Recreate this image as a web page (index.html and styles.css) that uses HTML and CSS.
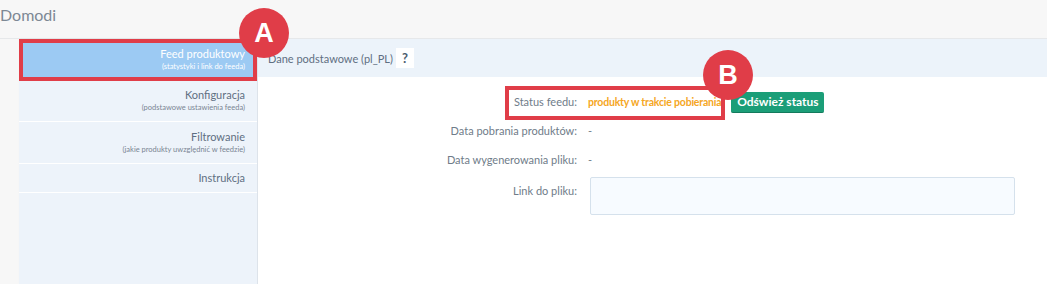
FILE: index.html
```html
<!DOCTYPE html>
<html lang="pl">
<head>
    <meta charset="UTF-8">
    <title>Domodi</title>
    <link rel="stylesheet" href="styles.css">
</head>
<body>
    <div class="top">Domodi</div>
    <div class="panel">
        <div class="sidebar">
            <div class="item active">
                <div class="title">Feed produktowy</div>
                <div class="sub">(statystyki i link do feeda)</div>
            </div>
            <div class="item">
                <div class="title">Konfiguracja</div>
                <div class="sub">(podstawowe ustawienia feeda)</div>
            </div>
            <div class="item">
                <div class="title">Filtrowanie</div>
                <div class="sub">(jakie produkty uwzględnić w feedzie)</div>
            </div>
            <div class="item short">
                <div class="title">Instrukcja</div>
            </div>
        </div>
        <div class="content">
            <div class="head">
                <span>Dane podstawowe (pl_PL)</span>
                <span class="help">?</span>
            </div>
            <div class="form">
                <div class="row">
                    <div class="label">Status feedu:</div>
                    <div class="value status">produkty w trakcie pobierania</div>
                    <button class="btn">Odśwież status</button>
                </div>
                <div class="row">
                    <div class="label">Data pobrania produktów:</div>
                    <div class="value">-</div>
                </div>
                <div class="row">
                    <div class="label">Data wygenerowania pliku:</div>
                    <div class="value">-</div>
                </div>
                <div class="row link">
                    <div class="label">Link do pliku:</div>
                    <div class="field"></div>
                </div>
            </div>
            <div class="mark-box"></div>
        </div>
        <div class="badge badge-a">A</div>
        <div class="badge badge-b">B</div>
    </div>
</body>
</html>
```

FILE: styles.css
```css
body {
    margin: 0;
    background: #f7f7f7;
    font-family: 'Lato', sans-serif;
    color: #6b7886;
    overflow: hidden;
}
.top {
    height: 38px;
    line-height: 30px;
    font-size: 16px;
    color: #7d8894;
}
.panel {
    position: relative;
    display: flex;
    height: 245px;
    border-top: 1px solid #e6e8ea;
}
.sidebar {
    width: 238px;
    margin-left: 19px;
    background: #edf3fa;
    border-right: 1px solid #dde3ea;
    box-shadow: 1px 0 2px rgba(0, 0, 0, 0.06);
}
.item {
    height: 41.5px;
    border-bottom: 1px solid #fff;
    padding-right: 12px;
    text-align: right;
    display: flex;
    flex-direction: column;
    justify-content: center;
    box-sizing: border-box;
}
.item.short {
    height: 29px;
}
.item .title {
    font-size: 11px;
    color: #5f6f82;
    line-height: 14px;
}
.item .sub {
    font-size: 7.5px;
    color: #7a8593;
    line-height: 11px;
}
.item.active {
    background: #9ccaf3;
    outline: 4px solid #e03d48;
    outline-offset: -4px;
}
.item.active .title,
.item.active .sub {
    color: #fff;
}
.content {
    position: relative;
    flex: 1;
    background: #fff;
}
.head {
    height: 38px;
    background: #ecf3fa;
    display: flex;
    align-items: center;
    padding-left: 10px;
    font-size: 11px;
    color: #5f6f82;
}
.help {
    margin-left: 3px;
    background: #fff;
    width: 18px;
    height: 20px;
    line-height: 20px;
    text-align: center;
    font-weight: bold;
    font-size: 13px;
    color: #4d5d6e;
}
.form {
    padding-top: 10px;
}
.row {
    display: flex;
    align-items: center;
    height: 29px;
    font-size: 11px;
}
.label {
    width: 319px;
    text-align: right;
    color: #6f7c89;
}
.value {
    margin-left: 11px;
    color: #6f7c89;
}
.value.status {
    color: #f5a623;
    font-weight: bold;
    font-size: 10.5px;
    letter-spacing: -0.2px;
}
.btn {
    margin-left: 10px;
    margin-top: 1px;
    border: none;
    background: #1b9e78;
    color: #fff;
    font-family: inherit;
    font-size: 12px;
    font-weight: bold;
    height: 21px;
    width: 93px;
    padding: 0;
    border-radius: 2px;
    border-bottom: 1px solid #137a5c;
}
.row.link {
    align-items: flex-start;
    height: auto;
    margin-top: 3px;
}
.row.link .label {
    padding-top: 7px;
}
.field {
    margin-left: 13px;
    width: 423px;
    height: 36px;
    background: #f7fbff;
    border: 1px solid #d5e1ec;
    border-radius: 2px;
}
.mark-box {
    position: absolute;
    left: 247px;
    top: 47px;
    width: 212px;
    height: 26px;
    border: 4px solid #e03d48;
}
.badge {
    position: absolute;
    width: 50px;
    height: 50px;
    border-radius: 50%;
    background: #e03d48;
    color: #fff;
    font-family: 'Liberation Sans', sans-serif;
    font-weight: bold;
    font-size: 27px;
    line-height: 51px;
    text-align: center;
}
.badge-a {
    left: 239px;
    top: -31px;
}
.badge-b {
    left: 703px;
    top: 11px;
}
```
